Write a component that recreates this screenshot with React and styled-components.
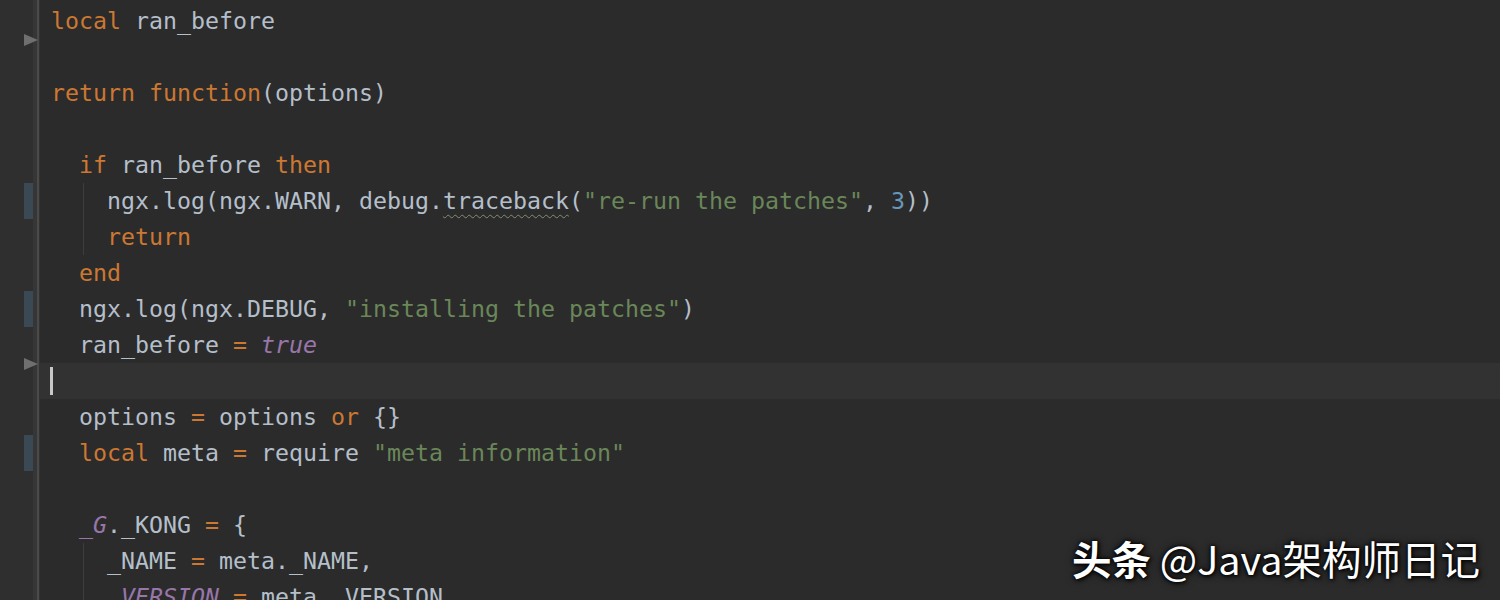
import React from "react";
import styled, { createGlobalStyle } from "styled-components";

const GlobalStyle = createGlobalStyle`
  html, body {
    margin: 0;
    background: #2b2b2b;
    overflow: hidden;
  }
`;

const colors = {
  plain: "#b4bfca",
  kw: "#cc7832",
  str: "#6a8759",
  num: "#6897bb",
  special: "#9876aa",
};

const Page = styled.div`
  position: relative;
  width: 1500px;
  height: 600px;
  background: #2b2b2b;
  display: flex;
  overflow: hidden;
`;

const Gutter = styled.div`
  width: 40px;
  flex: none;
  padding-top: 3px;
  background: linear-gradient(
    to right,
    #2f2f2f 33px,
    #363636 33px,
    #363636 37px,
    #4a4a4a 37px,
    #4a4a4a 39px,
    #333 39px
  );
`;

const GutterRow = styled.div`
  height: 36px;
  position: relative;
`;

const ChangeMark = styled.div`
  position: absolute;
  left: 24px;
  top: 0;
  width: 9px;
  height: 36px;
  background: #3a4954;
`;

const FoldMark = styled.div`
  position: absolute;
  left: 24px;
  bottom: -7px;
  width: 0;
  height: 0;
  border-top: 6px solid transparent;
  border-bottom: 6px solid transparent;
  border-left: 14px solid #6f6f6f;
`;

const Code = styled.div`
  flex: 1;
  padding-top: 3px;
  font-family: "DejaVu Sans Mono", "Liberation Mono", monospace;
  font-size: 23.25px;
  color: ${colors.plain};
`;

const Line = styled.div`
  height: 36px;
  line-height: 36px;
  padding-left: 11px;
  white-space: pre;
  display: flex;
  align-items: center;
  background: ${({ $current }) => ($current ? "#323232" : "transparent")};
  background-image: ${({ $guide }) =>
    $guide ? "linear-gradient(#3d3d3d, #3d3d3d)" : "none"};
  background-repeat: no-repeat;
  background-position: 43px 0;
  background-size: 1px 100%;
`;

const Tok = styled.span`
  color: ${({ $k }) => colors[$k] || colors.plain};
  font-style: ${({ $k }) => ($k === "special" ? "italic" : "normal")};
  text-decoration: ${({ $wavy }) => ($wavy ? "underline wavy #7f8f74" : "none")};
  text-decoration-thickness: 1px;
  text-underline-offset: 5px;
`;

const Caret = styled.span`
  display: inline-block;
  width: 3px;
  height: 28px;
  margin-left: -1px;
  background: #c8c8c8;
`;

const Watermark = styled.div`
  position: absolute;
  right: 20px;
  bottom: 14px;
  font-family: "Noto Sans CJK SC", "Noto Sans", sans-serif;
  font-size: 39.5px;
  color: #fff;
  text-shadow: 0 0 3px #000, 1px 1px 4px #000, 0 0 8px rgba(0, 0, 0, 0.8);
  white-space: nowrap;

  b {
    font-weight: 700;
  }
`;

const P = (t) => ({ t });
const K = (t) => ({ t, k: "kw" });
const S = (t) => ({ t, k: "str" });
const N = (t) => ({ t, k: "num" });
const X = (t) => ({ t, k: "special" });

const lines = [
  { toks: [K("local"), P(" ran_before")], fold: true },
  { toks: [] },
  { toks: [K("return"), P(" "), K("function"), P("(options)")] },
  { toks: [] },
  { toks: [P("  "), K("if"), P(" ran_before "), K("then")] },
  {
    toks: [
      P("    ngx.log(ngx.WARN, debug."),
      { t: "traceback", wavy: true },
      P("("),
      S('"re-run the patches"'),
      P(", "),
      N("3"),
      P("))"),
    ],
    change: true,
    guide: true,
  },
  { toks: [P("    "), K("return")], guide: true },
  { toks: [P("  "), K("end")] },
  {
    toks: [P("  ngx.log(ngx.DEBUG, "), S('"installing the patches"'), P(")")],
    change: true,
  },
  { toks: [P("  ran_before "), K("="), P(" "), X("true")], fold: true },
  { toks: [], current: true, caret: true },
  { toks: [P("  options "), K("="), P(" options "), K("or"), P(" {}")] },
  {
    toks: [
      P("  "),
      K("local"),
      P(" meta "),
      K("="),
      P(" require "),
      S('"meta information"'),
    ],
    change: true,
  },
  { toks: [] },
  { toks: [P("  "), X("_G"), P("._KONG "), K("="), P(" {")] },
  {
    toks: [P("    _NAME "), K("="), P(" meta._NAME,")],
    guide: true,
  },
  {
    toks: [P("    "), X("_VERSION"), P(" "), K("="), P(" meta._VERSION,")],
    guide: true,
  },
];

export default function App() {
  return (
    <>
      <GlobalStyle />
      <Page>
        <Gutter>
          {lines.map((l, i) => (
            <GutterRow key={i}>
              {l.change && <ChangeMark />}
              {l.fold && <FoldMark />}
            </GutterRow>
          ))}
        </Gutter>
        <Code>
          {lines.map((l, i) => (
            <Line key={i} $current={l.current} $guide={l.guide}>
              {l.caret && <Caret />}
              {l.toks.map((tk, j) => (
                <Tok key={j} $k={tk.k} $wavy={tk.wavy}>
                  {tk.t}
                </Tok>
              ))}
            </Line>
          ))}
        </Code>
        <Watermark>
          <b>头条</b> @Java架构师日记
        </Watermark>
      </Page>
    </>
  );
}
